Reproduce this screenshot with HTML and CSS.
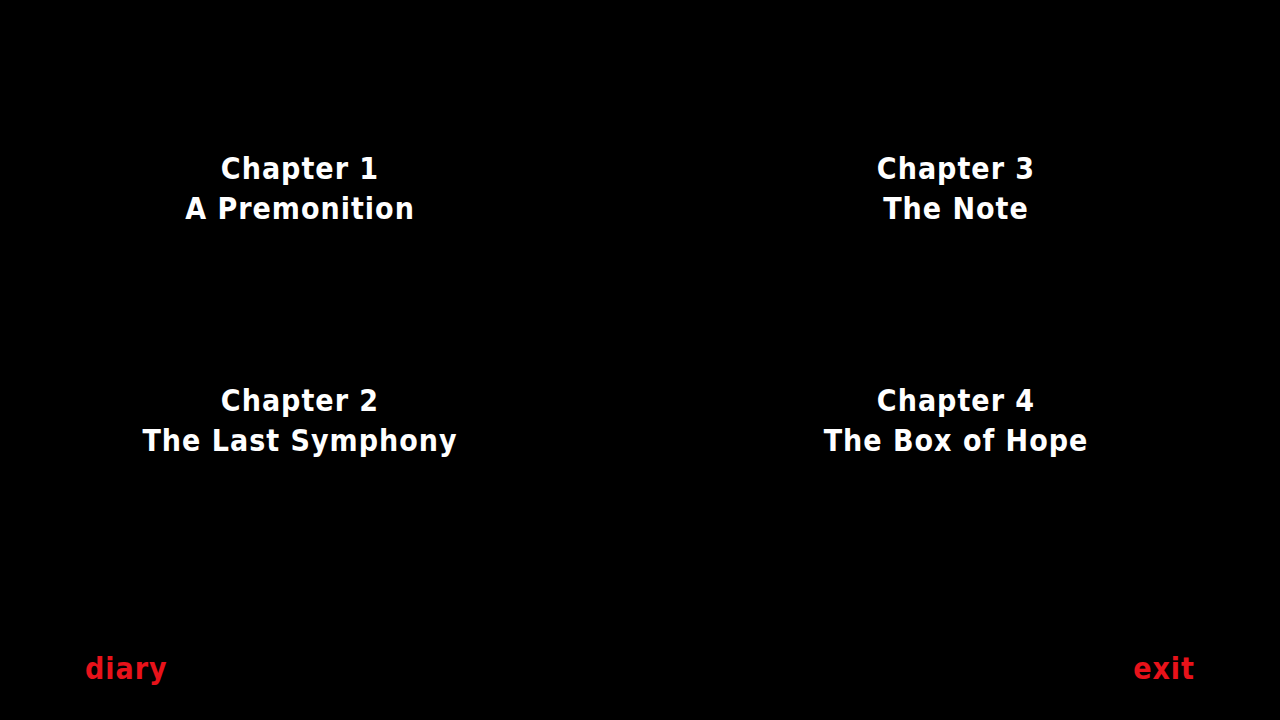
FILE: index.html
```html
<!DOCTYPE html>
<html lang="en">
<head>
<meta charset="utf-8">
<title>Chapters</title>
<link rel="stylesheet" href="styles.css">
</head>
<body>
<div class="page">
  <main class="chapters">
    <a class="chapter" href="#">Chapter 1<br>A Premonition</a>
    <a class="chapter" href="#">Chapter 3<br>The Note</a>
    <a class="chapter" href="#">Chapter 2<br>The Last Symphony</a>
    <a class="chapter" href="#">Chapter 4<br>The Box of Hope</a>
  </main>
  <footer class="footer">
    <a class="nav" href="#">diary</a>
    <a class="nav" href="#">exit</a>
  </footer>
</div>
</body>
</html>
```

FILE: styles.css
```css
html, body {
  margin: 0;
  padding: 0;
  background: #000;
}
.page {
  width: 1280px;
  height: 720px;
  display: flex;
  flex-direction: column;
  font-family: "DejaVu Sans Condensed", "DejaVu Sans", sans-serif;
  font-weight: bold;
  font-size: 30px;
  line-height: 40px;
  letter-spacing: 1px;
}
.chapters {
  display: grid;
  grid-template-columns: 600px 600px;
  column-gap: 56px;
  row-gap: 152px;
  padding-top: 149px;
}
.chapter {
  color: #fff;
  text-decoration: none;
  text-align: center;
}
.footer {
  margin-top: auto;
  display: flex;
  justify-content: space-between;
  padding: 0 85px 31px 85px;
}
.nav {
  color: #e8121a;
  text-decoration: none;
}
```
